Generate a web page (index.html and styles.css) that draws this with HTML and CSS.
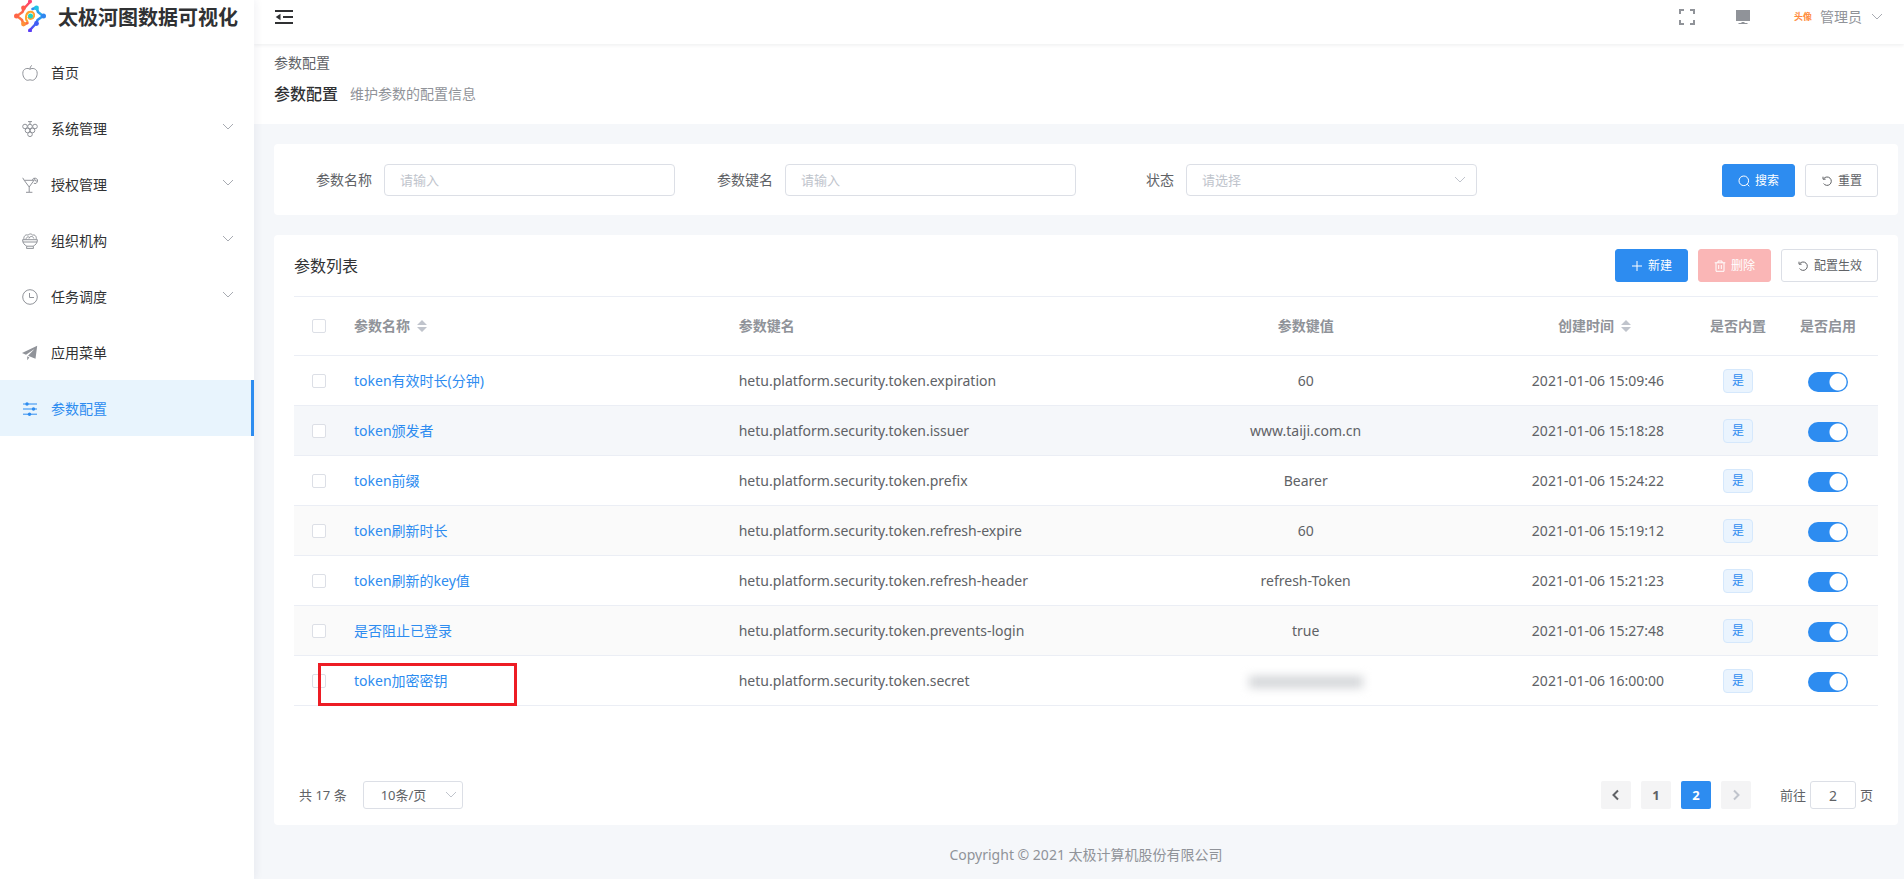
FILE: index.html
```html
<!DOCTYPE html>
<html lang="zh-CN">
<head>
<meta charset="utf-8">
<title>参数配置</title>
<link rel="stylesheet" href="styles.css">
</head>
<body>
<svg class="sprite" aria-hidden="true">
  <symbol id="i-down" viewBox="0 0 12 12"><path d="M1 3 6 8l5-5"/></symbol>
  <symbol id="i-refresh" viewBox="0 0 12 12"><path d="M2.800 3.600A4.200 4.200 0 1 1 2.600 8.500M2 1.700v2.500h2.600"/></symbol>
  <symbol id="i-sort" viewBox="0 0 10 12"><path d="M5 0l5 5H0zM5 12L0 7h10z"/></symbol>
</svg>
<div class="app">
  <aside class="sidebar">
    <div class="brand">
      <svg class="logo" viewBox="0 0 32 32" fill="none" stroke-linecap="round" stroke-linejoin="round">
        <defs>
          <linearGradient id="warm" x1="0" y1="1" x2="1" y2="0"><stop offset="0" stop-color="#ff8a3c"/><stop offset=".6" stop-color="#ff5a4c"/><stop offset="1" stop-color="#ff4270"/></linearGradient>
          <linearGradient id="cool" x1="1" y1="0" x2="0" y2="1"><stop offset="0" stop-color="#22c3e6"/><stop offset=".5" stop-color="#2f86f0"/><stop offset="1" stop-color="#5a3df5"/></linearGradient>
        </defs>
        <path d="M16 2 10 8.500 8.500 12 3 16l5 4 1.500 4.500 4-1.500" stroke="url(#warm)" stroke-width="2.500"/>
        <path d="M16 30l6-6.500 1.500-3.500 5.500-4-5-4-1.500-4.500-4 1.500" stroke="url(#cool)" stroke-width="2.500"/>
        <path d="M13.500 21.500c-2.500-2-2-8 1.500-9.500 3.500-1 6 1.500 5 4.500-1 3-4.500 3-5.500 1" stroke="#ffa22e" stroke-width="2"/>
        <circle cx="16" cy="1.500" r="2" fill="#ff4270"/><circle cx="9.500" cy="8" r="2.400" fill="#ff5a4c"/><circle cx="2.500" cy="16" r="2.500" fill="#ff6547"/><circle cx="9.500" cy="24" r="2.400" fill="#ff9038"/>
        <circle cx="16" cy="30.500" r="2" fill="#5a3df5"/><circle cx="22.500" cy="23.500" r="2.400" fill="#3f5df5"/><circle cx="29.500" cy="16" r="2.500" fill="#2f86f0"/><circle cx="22.500" cy="8" r="2.400" fill="#22c3e6"/>
        <circle cx="16.500" cy="16" r="2.500" fill="#26d3c0"/>
      </svg>
      <strong class="brand-name">太极河图数据可视化</strong>
    </div>
    <nav class="menu">
      <a class="item" href="#"><svg class="icon" viewBox="0 0 16 16"><path d="M8 4.300C6 2.600.8 3.200.8 8.300c0 3.600 2.400 7 4.900 7 .9 0 1.400-.5 2.300-.5s1.400.5 2.300.5c2.500 0 4.900-3.400 4.900-7C15.200 3.200 10 2.600 8 4.300zM8 4.300c0-1.700.5-3 1.800-3.900"/></svg><span>首页</span></a>
      <a class="item" href="#"><svg class="icon" viewBox="0 0 16 16"><path d="M6 .6h4M8 .6v3"/><circle cx="3" cy="5.500" r="2.300"/><circle cx="8" cy="5.500" r="2.300"/><circle cx="13" cy="5.500" r="2.300"/><circle cx="5.500" cy="9.500" r="2.300"/><circle cx="10.500" cy="9.500" r="2.300"/><circle cx="8" cy="13.300" r="2.300"/></svg><span>系统管理</span><svg class="arrow"><use href="#i-down"/></svg></a>
      <a class="item" href="#"><svg class="icon" viewBox="0 0 16 16"><path d="M.7.800 2.200 3.300 7.200 10v5M4 15.300h6.400M7.200 10l4.800-6.700H2.200M10.300 3.200a2.700 2.700 0 1 1 1.500 3.100M12.600 1l.3 2.500 2.300.8"/></svg><span>授权管理</span><svg class="arrow"><use href="#i-down"/></svg></a>
      <a class="item" href="#"><svg class="icon" viewBox="0 0 16 16"><path d="M.6 6.700h14.800c0 3.500-2 5.300-4.200 6.500H4.800C2.600 12 .6 10.200.6 6.700zM4.800 13.200l-.3 2.200h7l-.3-2.200M.9 9h14.200M1.900 6.500C1.300 3 4 1 6 2.200c2-2 4-1.300 4.500 0C13 1 15 4 14.100 6.500M4 6.300c.3-2.500 2.600-3.300 4-1.500M7 5.500c.5-2.500 4-3 4.800 0"/></svg><span>组织机构</span><svg class="arrow"><use href="#i-down"/></svg></a>
      <a class="item" href="#"><svg class="icon" viewBox="0 0 16 16"><circle cx="8" cy="8" r="7.300"/><path d="M7.500 4v4.500H12"/></svg><span>任务调度</span><svg class="arrow"><use href="#i-down"/></svg></a>
      <a class="item" href="#"><svg class="icon solid" viewBox="0 0 16 16"><path d="M15.200.8 0 8l4 1.800L12.500 4 6 10.700l7.500 3zM5.200 11.300v4l2.200-2.800z"/></svg><span>应用菜单</span></a>
      <a class="item active" href="#" aria-current="page"><svg class="icon" viewBox="0 0 16 16"><path d="M1 3h14M1 8h14M1 13.200h14"/><g class="knob"><circle cx="5" cy="3" r="1.700"/><circle cx="11.500" cy="8" r="1.700"/><circle cx="7.500" cy="13.200" r="1.700"/></g></svg><span>参数配置</span></a>
    </nav>
  </aside>
  <div class="main">
    <header class="topbar">
      <button class="plain" type="button" aria-label="收起菜单"><svg class="fold" viewBox="0 0 18 16"><path d="M0 2h18M8 8h10M0 14h18"/><path class="tri" d="M5.500 4.800v6.400L.7 8z"/></svg></button>
      <div class="tools">
        <button class="plain" type="button" aria-label="全屏"><svg class="icon full" viewBox="0 0 16 16"><path d="M1 5V1h4M11 1h4v4M15 11v4h-4M5 15H1v-4"/></svg></button>
        <button class="plain" type="button" aria-label="显示"><svg class="icon solid" viewBox="0 0 16 16"><path d="M1 1h14v11H1zM3.500 14h9v1h-9zM6.500 13h3v1h-3z"/></svg></button>
        <button class="plain user" type="button"><span class="avatar">头像</span><span>管理员</span><svg class="arrow"><use href="#i-down"/></svg></button>
      </div>
    </header>
    <div class="page-head">
      <div class="crumb">参数配置</div>
      <div class="heading"><h1>参数配置</h1><p>维护参数的配置信息</p></div>
    </div>
    <main class="content">
      <form class="card search">
        <div class="field"><label for="f-name">参数名称</label><input id="f-name" type="text" placeholder="请输入"></div>
        <div class="field"><label for="f-key">参数键名</label><input id="f-key" type="text" placeholder="请输入"></div>
        <div class="field"><label for="f-state">状态</label><div class="select"><select id="f-state"><option>请选择</option></select><svg class="arrow"><use href="#i-down"/></svg></div></div>
        <div class="actions">
          <button class="btn primary" type="button"><svg viewBox="0 0 12 12"><circle cx="5.800" cy="5.800" r="4.800"/><path d="M9.300 9.300l2 2"/></svg>搜索</button>
          <button class="btn" type="button"><svg><use href="#i-refresh"/></svg>重置</button>
        </div>
      </form>
      <section class="card list">
        <div class="list-head">
          <h2>参数列表</h2>
          <div class="actions">
            <button class="btn primary" type="button"><svg viewBox="0 0 12 12"><path d="M6 1v10M1 6h10"/></svg>新建</button>
            <button class="btn danger" type="button" disabled><svg viewBox="0 0 12 12"><path d="M.7 2.800h10.600M4 2.800V1h4v1.800M2 2.800v8.500h8V2.800M4.700 5v4M7.300 5v4"/></svg>删除</button>
            <button class="btn" type="button"><svg><use href="#i-refresh"/></svg>配置生效</button>
          </div>
        </div>
        <table class="grid">
          <colgroup><col class="c-check"><col><col><col><col class="c-date"><col class="c-tag"><col class="c-switch"></colgroup>
          <thead>
            <tr><th class="mid"><input class="check" type="checkbox" aria-label="全选"></th><th>参数名称<svg class="sort"><use href="#i-sort"/></svg></th><th>参数键名</th><th class="mid">参数键值</th><th class="mid">创建时间<svg class="sort"><use href="#i-sort"/></svg></th><th class="mid">是否内置</th><th class="mid">是否启用</th></tr>
          </thead>
          <tbody>
            <tr><td class="mid"><input class="check" type="checkbox" aria-label="选择"></td><td><a href="#">token有效时长(分钟)</a></td><td>hetu.platform.security.token.expiration</td><td class="mid">60</td><td class="mid">2021-01-06 15:09:46</td><td class="mid"><span class="tag">是</span></td><td class="mid"><input class="switch" type="checkbox" role="switch" aria-label="启用" checked></td></tr>
            <tr class="hover"><td class="mid"><input class="check" type="checkbox" aria-label="选择"></td><td><a href="#">token颁发者</a></td><td>hetu.platform.security.token.issuer</td><td class="mid">www.taiji.com.cn</td><td class="mid">2021-01-06 15:18:28</td><td class="mid"><span class="tag">是</span></td><td class="mid"><input class="switch" type="checkbox" role="switch" aria-label="启用" checked></td></tr>
            <tr><td class="mid"><input class="check" type="checkbox" aria-label="选择"></td><td><a href="#">token前缀</a></td><td>hetu.platform.security.token.prefix</td><td class="mid">Bearer</td><td class="mid">2021-01-06 15:24:22</td><td class="mid"><span class="tag">是</span></td><td class="mid"><input class="switch" type="checkbox" role="switch" aria-label="启用" checked></td></tr>
            <tr><td class="mid"><input class="check" type="checkbox" aria-label="选择"></td><td><a href="#">token刷新时长</a></td><td>hetu.platform.security.token.refresh-expire</td><td class="mid">60</td><td class="mid">2021-01-06 15:19:12</td><td class="mid"><span class="tag">是</span></td><td class="mid"><input class="switch" type="checkbox" role="switch" aria-label="启用" checked></td></tr>
            <tr><td class="mid"><input class="check" type="checkbox" aria-label="选择"></td><td><a href="#">token刷新的key值</a></td><td>hetu.platform.security.token.refresh-header</td><td class="mid">refresh-Token</td><td class="mid">2021-01-06 15:21:23</td><td class="mid"><span class="tag">是</span></td><td class="mid"><input class="switch" type="checkbox" role="switch" aria-label="启用" checked></td></tr>
            <tr><td class="mid"><input class="check" type="checkbox" aria-label="选择"></td><td><a href="#">是否阻止已登录</a></td><td>hetu.platform.security.token.prevents-login</td><td class="mid">true</td><td class="mid">2021-01-06 15:27:48</td><td class="mid"><span class="tag">是</span></td><td class="mid"><input class="switch" type="checkbox" role="switch" aria-label="启用" checked></td></tr>
            <tr><td class="mid"><input class="check" type="checkbox" aria-label="选择"></td><td class="marked"><a href="#">token加密密钥</a></td><td>hetu.platform.security.token.secret</td><td class="mid"><span class="secret"></span></td><td class="mid">2021-01-06 16:00:00</td><td class="mid"><span class="tag">是</span></td><td class="mid"><input class="switch" type="checkbox" role="switch" aria-label="启用" checked></td></tr>
          </tbody>
        </table>
        <div class="pager">
          <span>共 17 条</span>
          <div class="select size"><select aria-label="每页条数"><option>10条/页</option></select><svg class="arrow"><use href="#i-down"/></svg></div>
          <div class="pages">
            <button type="button" aria-label="上一页"><svg viewBox="0 0 12 12"><path d="M8 1.500 3.500 6 8 10.500"/></svg></button>
            <button type="button">1</button>
            <button type="button" class="current" aria-current="page">2</button>
            <button type="button" disabled aria-label="下一页"><svg viewBox="0 0 12 12"><path d="M4 1.500 8.500 6 4 10.500"/></svg></button>
          </div>
          <label class="jump">前往<input type="text" value="2">页</label>
        </div>
      </section>
    </main>
    <footer>Copyright © 2021 太极计算机股份有限公司</footer>
  </div>
</div>
</body>
</html>
```

FILE: styles.css
```css
*, ::before, ::after { box-sizing: border-box; }
body {
  margin: 0;
  background: #f5f7fa;
  color: #606266;
  font: 14px/20px "Noto Sans", "Noto Sans CJK SC", sans-serif;
}
a { color: #2d8cf0; text-decoration: none; }
h1, h2, p { margin: 0; }
button, input, select { font: inherit; color: inherit; }
svg { fill: none; stroke: currentColor; flex: none; }
.sprite { position: absolute; width: 0; height: 0; }
.app { display: flex; min-height: 100vh; }

.sidebar {
  flex: 0 0 254px;
  background: #fff;
  box-shadow: 2px 0 8px rgba(29, 35, 80, .06);
  z-index: 2;
}
.brand { display: flex; align-items: flex-start; gap: 12px; height: 44px; padding-left: 14px; }
.logo { width: 32px; height: 32px; stroke: none; }
.brand-name { color: #303133; font-size: 20px; line-height: 36px; white-space: nowrap; }
.menu { display: flex; flex-direction: column; }
.item {
  display: flex;
  align-items: center;
  height: 56px;
  padding: 2px 20px 0 22px;
  color: #303133;
}
.item span { margin-left: 13px; }
.icon { width: 16px; height: 16px; color: #909399; }
.icon.solid { fill: currentColor; stroke: none; }
.arrow { width: 12px; height: 12px; color: #a8abb2; }
.item .arrow { margin: 0 0 4px auto; }
.item.active { background: #e8f4fd; color: #2d8cf0; border-right: 3px solid #2d8cf0; }
.item.active .icon { color: #2d8cf0; }
.knob { fill: currentColor; stroke: none; }

.main { flex: 1; min-width: 0; display: flex; flex-direction: column; }
.topbar {
  display: flex;
  justify-content: space-between;
  align-items: flex-start;
  height: 44px;
  padding: 0 19px 0 21px;
  background: #fff;
  box-shadow: 0 1px 4px rgba(0, 21, 41, .08);
  z-index: 1;
}
.plain { display: flex; align-items: center; height: 34px; padding: 0; border: 0; background: none; color: #909399; }
.fold { width: 18px; height: 16px; color: #303133; stroke-width: 2; }
.tri { fill: currentColor; stroke: none; }
.tools { display: flex; gap: 40px; }
.full { stroke-width: 2; }
.user { gap: 8px; padding-left: 3px; }
.avatar { width: 18px; color: #ff8c3e; font-size: 9px; font-weight: 700; }
.user .arrow { margin-left: 1px; margin-right: 2px; }
.page-head { padding: 9px 20px 19px; background: #fff; }
.heading { display: flex; align-items: center; gap: 12px; margin-top: 10px; }
h1 { color: #303133; font-size: 16px; line-height: 22px; font-weight: 500; }
.heading p { color: #909399; }

.content { display: flex; flex-direction: column; gap: 20px; padding: 20px 6px 0 20px; }
.card { background: #fff; border-radius: 4px; }
.search {
  display: grid;
  grid-template-columns: repeat(4, 1fr);
  align-items: start;
  padding: 20px 20px 18px 0;
}
.field { display: flex; align-items: center; }
.field label { flex: 0 0 98px; margin-right: 12px; text-align: right; }
.field input, .select select {
  width: 100%;
  height: 32px;
  padding: 0 15px;
  border: 1px solid #dcdfe6;
  border-radius: 4px;
  background: #fff;
  font-size: 13px;
  appearance: none;
}
.field input { flex: 1; min-width: 0; }
.field select, ::placeholder { color: #c0c4cc; opacity: 1; }
.select { position: relative; flex: 1; }
.select .arrow { position: absolute; right: 11px; top: 50%; margin-top: -6px; color: #c0c4cc; pointer-events: none; }
.actions { display: flex; justify-content: flex-end; gap: 10px; }
.btn {
  display: flex;
  align-items: center;
  gap: 5px;
  height: 33px;
  padding: 0 15px;
  border: 1px solid #dcdfe6;
  border-radius: 3px;
  background: #fff;
  font-size: 12px;
}
.btn svg { width: 12px; height: 12px; }
.btn.primary { background: #2d8cf0; border-color: #2d8cf0; color: #fff; }
.btn.danger { background: #fab6b6; border-color: #fab6b6; color: #fff; }

.list { padding: 14px 20px 16px; }
.list-head { display: flex; justify-content: space-between; align-items: center; padding-bottom: 14px; }
h2 { color: #303133; font-size: 16px; line-height: 24px; font-weight: 400; }
.grid { width: 100%; table-layout: fixed; border-collapse: separate; border-spacing: 0; border-top: 1px solid #ebeef5; }
.c-check { width: 50px; }
.c-date { width: 200px; }
.c-tag { width: 80px; }
.c-switch { width: 100px; }
.grid th, .grid td { height: 50px; padding: 0 10px; border-bottom: 1px solid #ebeef5; text-align: left; white-space: nowrap; }
.grid th { height: 59px; color: #909399; font-weight: 700; }
.grid .mid { text-align: center; }
.grid tbody tr:nth-child(even) { background: #fafafa; }
.grid tbody tr.hover { background: #f5f7fa; }
.grid th.mid:nth-child(n+6) { padding: 0; }
.sort { width: 10px; height: 12px; margin: 0 7px; fill: #c0c4cc; stroke: none; vertical-align: -1px; }
.check { display: block; width: 14px; height: 14px; margin: 0 auto; border: 1px solid #dcdfe6; border-radius: 2px; background: #fff; appearance: none; }
.tag {
  display: inline-block;
  height: 24px;
  padding: 0 8px;
  border: 1px solid #d5e8fc;
  border-radius: 4px;
  background: #eaf4fe;
  color: #2d8cf0;
  font-size: 12px;
  line-height: 22px;
}
.switch { display: block; width: 40px; height: 20px; margin: 2px auto 0; border-radius: 10px; background: radial-gradient(circle at 30px 10px, #fff 8px, #2d8cf0 9px); appearance: none; }
.secret { display: inline-block; width: 114px; height: 12px; background: #d4d6d9; filter: blur(5px); vertical-align: middle; }
.marked { position: relative; }
.marked::after { content: ""; position: absolute; left: -26px; top: 7px; width: 199px; height: 43px; border: 3px solid #ed1c24; pointer-events: none; }

.pager { display: flex; align-items: center; margin-top: 75px; padding: 0 5px; font-size: 13px; }
.size { flex: 0 0 100px; margin-left: 16px; }
.size select { height: 28px; padding: 0 25px 0 17px; border-radius: 3px; }
.size .arrow { right: 6px; }
.pages { display: flex; gap: 10px; margin-left: auto; }
.pages button {
  display: flex;
  align-items: center;
  justify-content: center;
  width: 30px;
  height: 28px;
  padding: 0;
  border: 0;
  border-radius: 2px;
  background: #f4f4f5;
  font-weight: 700;
}
.pages svg { width: 12px; height: 12px; stroke-width: 2; }
.pages button:disabled { color: #c0c4cc; }
.pages .current { background: #2d8cf0; color: #fff; }
.jump { display: flex; align-items: center; gap: 4px; margin-left: 29px; }
.jump input { width: 46px; height: 28px; padding: 0; border: 1px solid #dcdfe6; border-radius: 3px; font-size: 14px; text-align: center; }
footer { padding: 20px 6px 14px 20px; color: #909399; text-align: center; }
```
